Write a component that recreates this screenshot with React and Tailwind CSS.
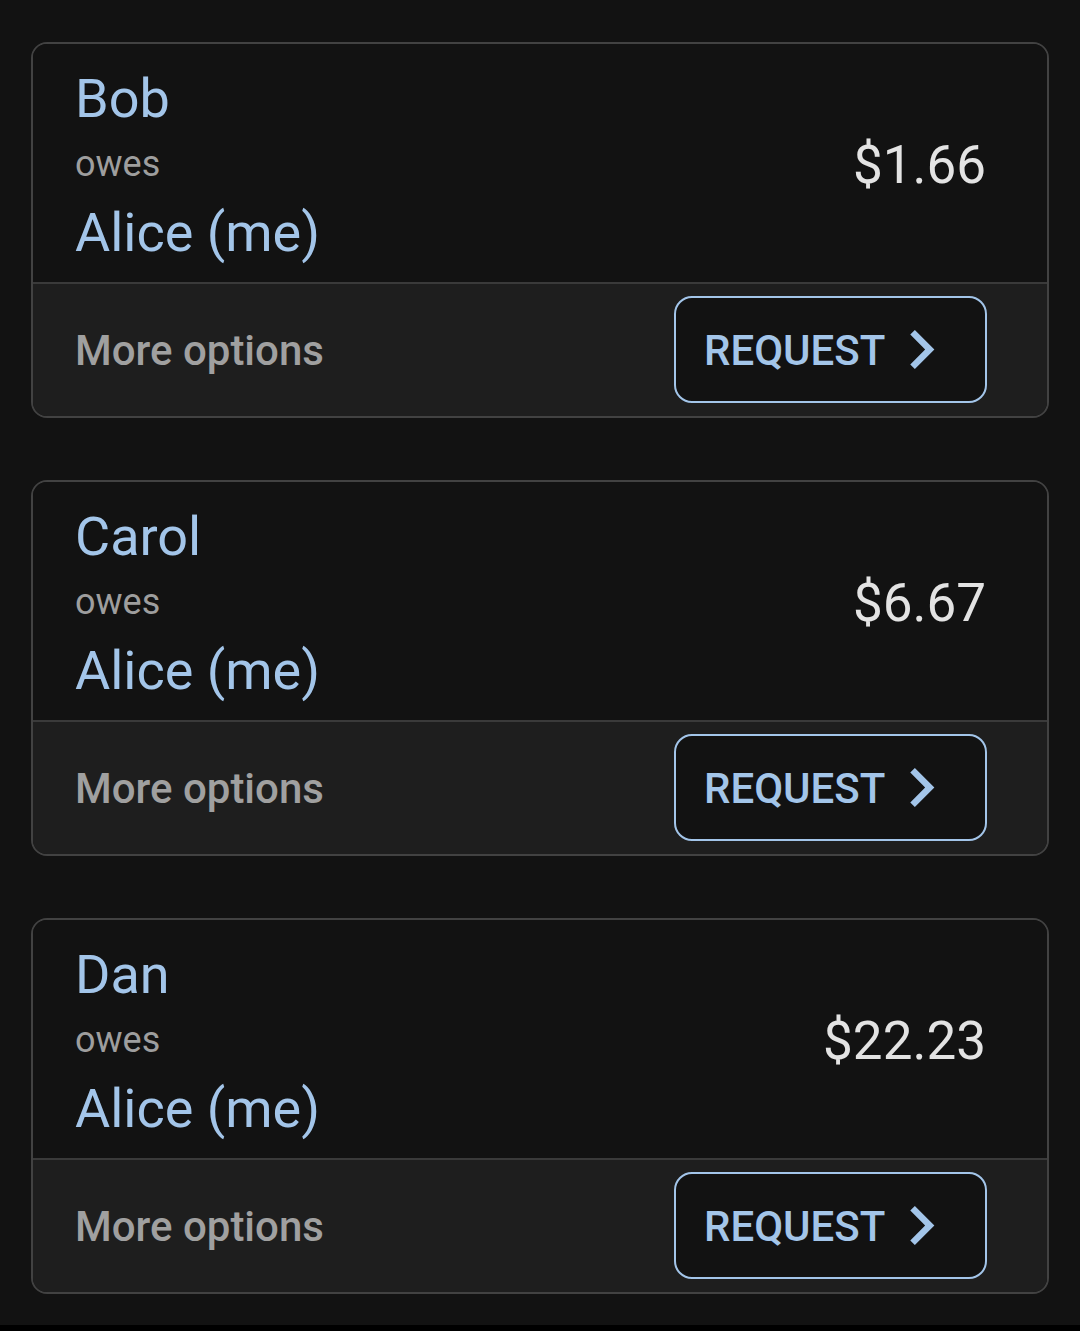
const debts = [
  { from: 'Bob', to: 'Alice (me)', amount: '$1.66' },
  { from: 'Carol', to: 'Alice (me)', amount: '$6.67' },
  { from: 'Dan', to: 'Alice (me)', amount: '$22.23' },
]

function Chevron() {
  return (
    <svg viewBox="8.2 6 8 12" width="26" height="39" className="shrink-0">
      <path d="M10 6L8.59 7.41 13.17 12l-4.58 4.59L10 18l6-6z" fill="#a3c5e9" />
    </svg>
  )
}

function DebtCard({ debt }) {
  return (
    <div className="rounded-[16px] border-2 border-[#424242] overflow-hidden">
      {/* summary */}
      <div className="flex items-start justify-between bg-[#121212] pl-[42px] pr-[61px] pt-[23px] pb-[18px]">
        <div className="flex flex-col">
          <span className="text-[54px] leading-[63px] text-[#a3c5e9]">{debt.from}</span>
          <span className="mt-[13px] text-[36px] leading-[42px] text-[#9e9e9e]">owes</span>
          <span className="mt-[16px] text-[54px] leading-[63px] text-[#a3c5e9]">{debt.to}</span>
        </div>
        <span className="mt-[70px] text-[53px] leading-[57px] text-[#e3e3e3]">{debt.amount}</span>
      </div>

      {/* actions */}
      <div className="flex items-center justify-between border-t-2 border-[#3a3a3a] bg-[#1e1e1e] pl-[42px] pr-[60px] pt-[12px] pb-[13px]">
        <span className="pt-[3px] text-[42px] leading-[50px] font-medium text-[#a0a0a0]">More options</span>
        <button className="flex items-center gap-[24px] h-[107px] w-[313px] rounded-[18px] border-2 border-[#a3c5e9] bg-[#121212] pl-[28px]">
          <span className="pt-[3px] text-[42px] leading-[50px] font-medium text-[#a3c5e9]">REQUEST</span>
          <Chevron />
        </button>
      </div>
    </div>
  )
}

export default function App() {
  return (
    <div className="bg-black h-[1331px] font-['Roboto',sans-serif]">
      <div className="bg-[#121212] h-[1325px] px-[31px] pt-[42px] flex flex-col gap-[62px]">
        {debts.map(d => (
          <DebtCard key={d.from} debt={d} />
        ))}
      </div>
    </div>
  )
}
